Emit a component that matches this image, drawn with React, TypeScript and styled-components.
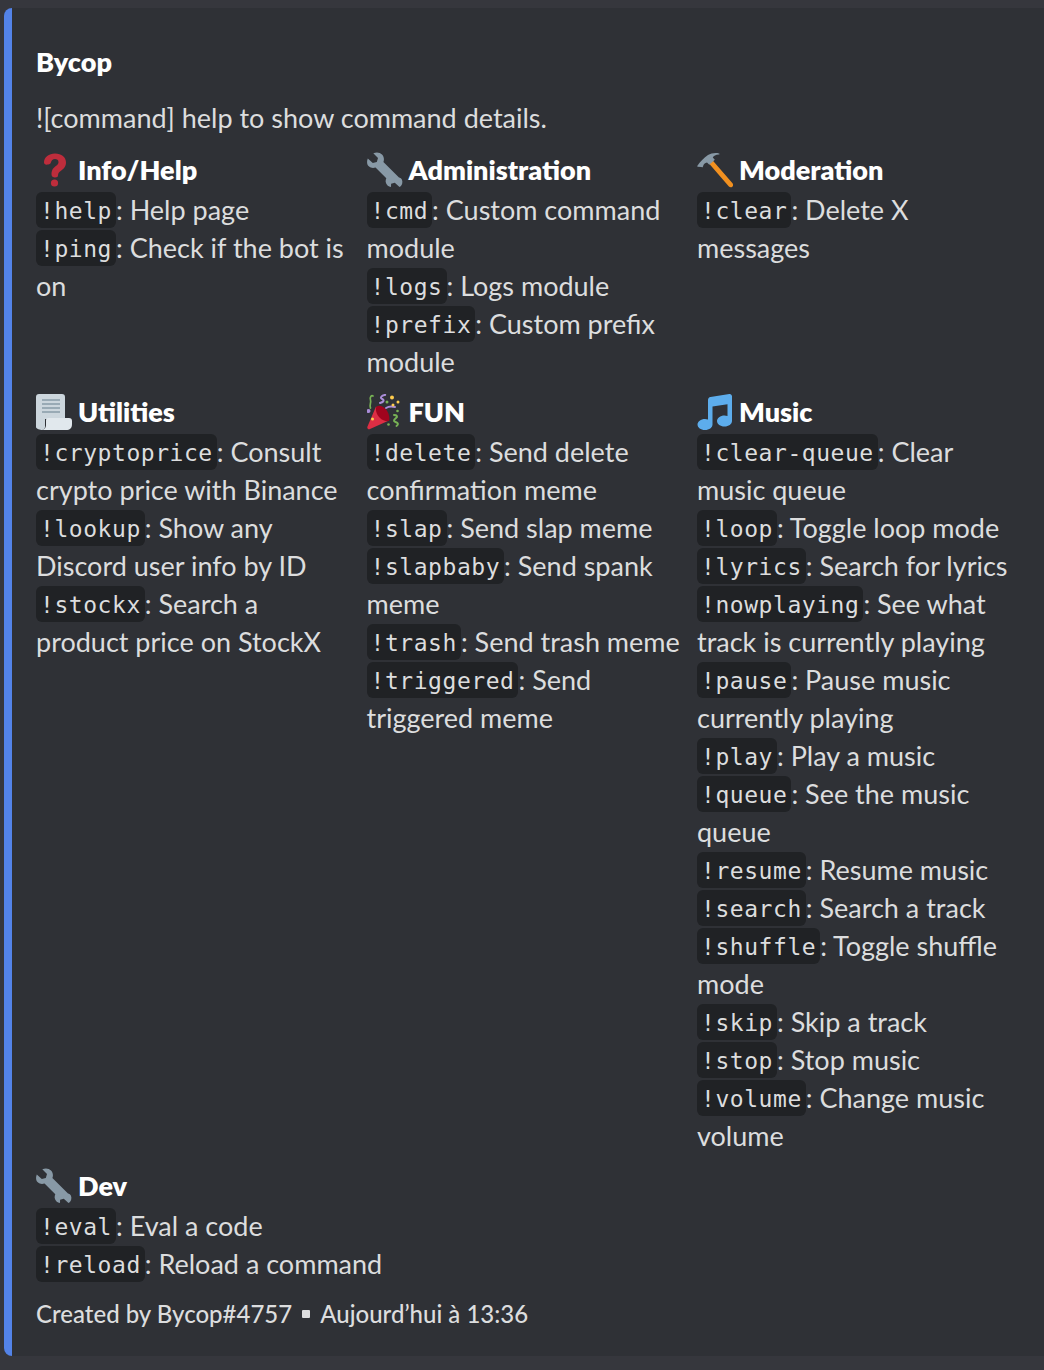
import { ReactNode } from 'react';
import styled, { createGlobalStyle } from 'styled-components';

const GlobalStyle = createGlobalStyle`
	html, body {
		margin: 0;
		padding: 0;
		background: #36373d;
	}
`;

const Card = styled.div`
	box-sizing: border-box;
	margin: 8px 0 0 4px;
	height: 1348px;
	background: #2f3136;
	border-left: 8px solid #5383e8;
	border-radius: 8px 0 0 8px;
	padding: 35px 24px 0 24px;
	font-family: Lato, "Noto Sans", sans-serif;
	font-size: 27px;
	line-height: 38px;
	color: #dcddde;
`;

const Author = styled.div`
	font-size: 27px;
	font-weight: 800;
	color: #ffffff;
`;

const Description = styled.div`
	margin-top: 18px;
`;

const Fields = styled.div`
	display: grid;
	grid-template-columns: repeat(3, 314.5px);
	column-gap: 16px;
	row-gap: 12px;
	margin-top: 14px;
`;

const Field = styled.div<{ $full?: boolean }>`
	grid-column: ${({ $full }) => ($full ? '1 / -1' : 'auto')};
`;

const FieldTitle = styled.div`
	display: flex;
	align-items: center;
	gap: 6px;
	height: 38px;
	font-size: 27px;
	font-weight: 800;
	color: #ffffff;
	margin-bottom: 2px;
`;

const Line = styled.div`
	min-height: 38px;
`;

const Code = styled.code`
	display: inline-block;
	height: 36px;
	line-height: 39px;
	vertical-align: top;
	margin-top: 1px;
	padding: 0 4px;
	border-radius: 6px;
	background: #202225;
	font-family: "DejaVu Sans Mono", monospace;
	font-size: 23px;
	letter-spacing: 0.55px;
	color: #dcddde;
`;

const Footer = styled.div`
	display: flex;
	align-items: center;
	margin-top: 12px;
	font-size: 24px;
	font-weight: 500;
	color: #dcddde;
`;

const Dot = styled.span`
	width: 8px;
	height: 8px;
	margin: 0 10px;
	background: #dcddde;
	border-radius: 1px;
`;

const Emoji = styled.svg`
	width: 36px;
	height: 36px;
	flex: none;
`;

const Question = () => (
	<Emoji viewBox="0 0 36 36">
		<path
			fill="#be2d3c"
			d="M8 10.5C8 5 13 1.5 19 1.5c6.500 0 11 3.700 11 9 0 4.300-2.500 6.500-5 8.300-2 1.400-3 2.400-3 4.700 0 1-1 2-3 2s-3.500-1-3.500-3c0-4.600 2-6.700 4.300-8.400 1.700-1.300 2.700-2.300 2.700-3.900 0-2-1.500-3.200-3.500-3.200-2.400 0-3.500 1.500-4 3.300-.4 1.300-1.200 2.200-3 2.200C9.300 13 8 12 8 10.500z"
		/>
		<circle fill="#be2d3c" cx="18.500" cy="31" r="3.600" />
	</Emoji>
);

const Wrench = () => (
	<Emoji viewBox="0 0 36 36">
		<path
			fill="#8899a6"
			d="M0.800 6.500 5.800 11l4-1 1.200-4L6.300 1.200C9.500-.200 13 .300 15 2.500c2 2.100 2.400 5 1.400 7.600L32 25.600c.5-.1 3 .9 3.300 3.400.3 3-.8 4.800-2.800 6l-4.700-4.300-3.700 1-.1 3.400c-2.500-.6-5-2.500-5.300-5.200-.2-1.500.2-2.700.6-3.700L8.500 15.600c-2.500.8-4.800.5-6.700-1.300C-.2 12.400-.4 9.200.8 6.500z"
		/>
	</Emoji>
);

const Hammer = () => (
	<Emoji viewBox="0 0 36 36">
		<path fill="#f19020" d="M12 11.500l3.500-3.200 20 23c.9 1 .8 2.500-.2 3.400-1 .8-2.500.7-3.400-.3z" />
		<path
			fill="#8899a6"
			d="M.4 13.700C3 10 7 5.500 11 3c3-1.800 7.500-2.600 11-1.600.8.300.6 1-.2 1-3.200.2-5 1.200-6 3l2 2.300-5.500 5-2.300-2.300c-2 .3-3.600 2-4 4-.2 1-1 1.100-1.500.5L.5 14.700c-.2-.3-.3-.7-.1-1z"
		/>
	</Emoji>
);

const Scroll = () => (
	<Emoji viewBox="0 0 36 36">
		<path fill="#ccd6dd" d="M3 0h23c2 0 3 1 3 3v22H9v8c0 2-1.500 3-3 3s-6-1-6-3V3c0-2 1-3 3-3z" />
		<path fill="#99aab5" d="M6 5h18v2H6zm0 4h18v2H6zm0 4h18v2H6zm0 4h18v2H6z" />
		<path fill="#e1e8ed" d="M12 24h21c2 0 3 1 3 3v3c0 4-2 6-6 6H5c3 0 5-2 5-5v-5c0-1 1-2 2-2z" />
	</Emoji>
);

const Party = () => (
	<Emoji viewBox="0 0 36 36">
		<path fill="#dd2e44" d="M9 12.500 0.500 32.500c-.8 1.700.8 3.200 2.500 2.500l19-8.500z" />
		<path fill="#a0041e" d="M9.500 12.500c3-2 7.500 0 10 3.500s3.500 8.500 2.500 11c-3 .5-6.500-.5-9.500-3.500s-4.500-8-3-11z" />
		<circle fill="#ffcc4d" cx="5.500" cy="25" r="1.500" />
		<path fill="none" stroke="#77b255" strokeWidth="1.700" strokeLinecap="round" d="M3.500 14c-1.500-3 1-5 0-8s1-5 2.500-4" />
		<path fill="none" stroke="#aa8dd8" strokeWidth="2" strokeLinecap="round" d="M13 9c3-1 4.500-2 3-3.500s-3-1-1.500-3S19 1.500 18 0.500" />
		<path fill="none" stroke="#aa8dd8" strokeWidth="2" strokeLinecap="round" d="M19 14c3-2 5-2 9-1" />
		<path fill="none" stroke="#77b255" strokeWidth="2" strokeLinecap="round" d="M27 21c3 0 4 1.500 2 3s-3 3-.5 4 3.500 2 1 4" />
		<circle fill="#aa8dd8" cx="1.500" cy="17" r="2" />
		<circle fill="#ffcc4d" cx="25" cy="3.500" r="2" />
		<circle fill="#ffcc4d" cx="31" cy="8" r="1.500" />
		<circle fill="#ffcc4d" cx="26" cy="11" r="1.500" />
		<circle fill="#77b255" cx="20" cy="8" r="1.500" />
		<circle fill="#77b255" cx="30.500" cy="17" r="1.300" />
		<circle fill="#77b255" cx="21.500" cy="30.500" r="1.300" />
	</Emoji>
);

const Notes = () => (
	<Emoji viewBox="0 0 36 36">
		<path
			fill="#5dadec"
			d="M35 2.500c0-1.500-1.200-2.600-2.700-2.400L13.500 3C12 3.200 11 4.500 11 6v19.500c-1-.3-2-.5-3-.5-4.200 0-7.500 2.500-7.500 5.500S3.800 36 8 36s7.500-2.500 7.500-5.500V12.500l15-2.300V22c-1-.3-2-.5-3-.5-4.200 0-7.500 2.500-7.500 5.500s3.300 5.500 7.500 5.500S35 30 35 27z"
		/>
	</Emoji>
);

type Item = { cmd: string; text: ReactNode };
type Section = { icon: ReactNode; title: string; items: Item[]; full?: boolean };

const SECTIONS: Section[] = [
	{
		icon: <Question />,
		title: 'Info/Help',
		items: [
			{ cmd: '!help', text: 'Help page' },
			{ cmd: '!ping', text: 'Check if the bot is on' },
		],
	},
	{
		icon: <Wrench />,
		title: 'Administration',
		items: [
			{ cmd: '!cmd', text: 'Custom command module' },
			{ cmd: '!logs', text: 'Logs module' },
			{ cmd: '!prefix', text: 'Custom prefix module' },
		],
	},
	{
		icon: <Hammer />,
		title: 'Moderation',
		items: [{ cmd: '!clear', text: 'Delete X messages' }],
	},
	{
		icon: <Scroll />,
		title: 'Utilities',
		items: [
			{ cmd: '!cryptoprice', text: 'Consult crypto price with Binance' },
			{ cmd: '!lookup', text: 'Show any Discord user info by ID' },
			{ cmd: '!stockx', text: 'Search a product price on StockX' },
		],
	},
	{
		icon: <Party />,
		title: 'FUN',
		items: [
			{ cmd: '!delete', text: 'Send delete confirmation meme' },
			{ cmd: '!slap', text: 'Send slap meme' },
			{ cmd: '!slapbaby', text: 'Send spank meme' },
			{ cmd: '!trash', text: 'Send trash meme' },
			{ cmd: '!triggered', text: 'Send triggered meme' },
		],
	},
	{
		icon: <Notes />,
		title: 'Music',
		items: [
			{ cmd: '!clear-queue', text: 'Clear music queue' },
			{ cmd: '!loop', text: 'Toggle loop mode' },
			{ cmd: '!lyrics', text: 'Search for lyrics' },
			{ cmd: '!nowplaying', text: 'See what track is currently playing' },
			{ cmd: '!pause', text: 'Pause music currently playing' },
			{ cmd: '!play', text: 'Play a music' },
			{ cmd: '!queue', text: 'See the music queue' },
			{ cmd: '!resume', text: 'Resume music' },
			{ cmd: '!search', text: 'Search a track' },
			{ cmd: '!shuffle', text: 'Toggle shuffle mode' },
			{ cmd: '!skip', text: 'Skip a track' },
			{ cmd: '!stop', text: 'Stop music' },
			{ cmd: '!volume', text: 'Change music volume' },
		],
	},
	{
		icon: <Wrench />,
		title: 'Dev',
		full: true,
		items: [
			{ cmd: '!eval', text: 'Eval a code' },
			{ cmd: '!reload', text: 'Reload a command' },
		],
	},
];

export default function App() {
	return (
		<>
			<GlobalStyle />
			<Card>
				<Author>Bycop</Author>
				<Description>![command] help to show command details.</Description>
				<Fields>
					{SECTIONS.map((section) => (
						<Field key={section.title} $full={section.full}>
							<FieldTitle>
								{section.icon}
								{section.title}
							</FieldTitle>
							{section.items.map((item) => (
								<Line key={item.cmd}>
									<Code>{item.cmd}</Code>: {item.text}
								</Line>
							))}
						</Field>
					))}
				</Fields>
				<Footer>
					Created by Bycop#4757
					<Dot />
					Aujourd’hui à 13:36
				</Footer>
			</Card>
		</>
	);
}
